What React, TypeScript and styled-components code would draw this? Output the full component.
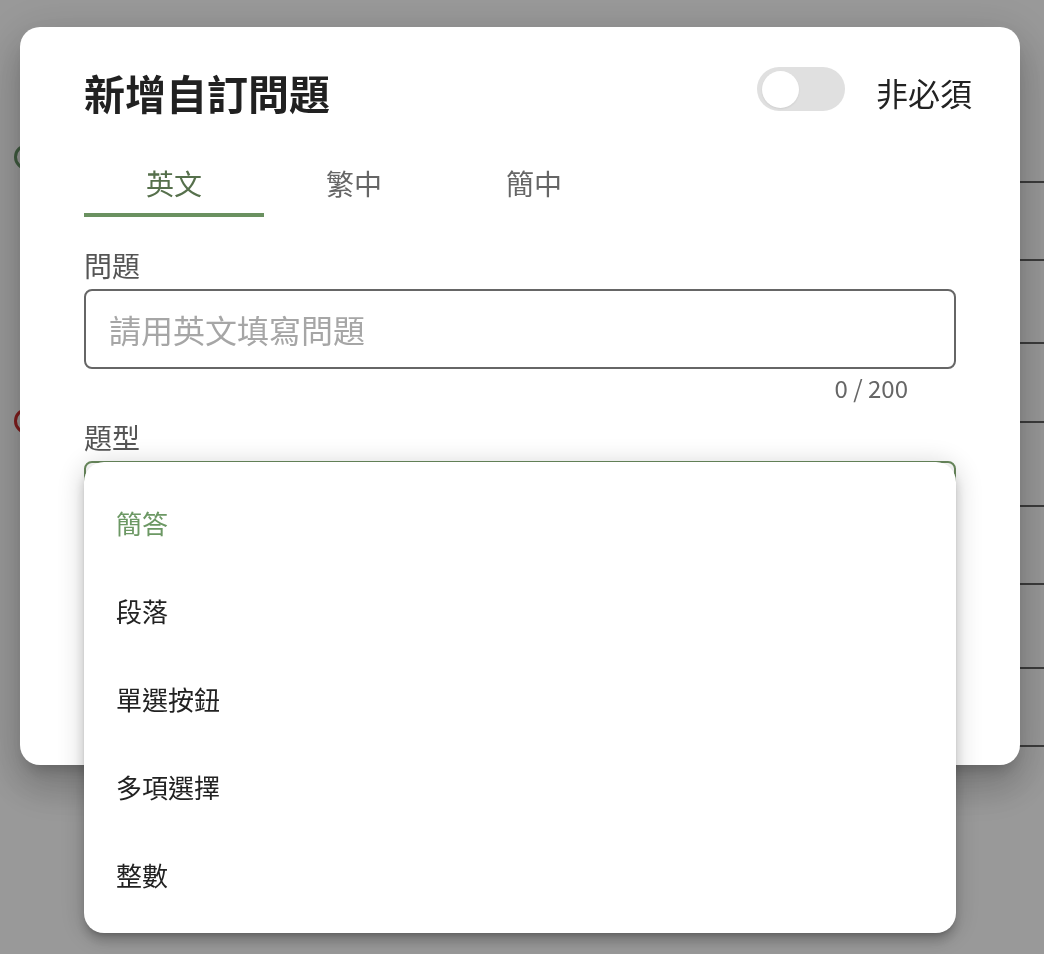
import React from "react";
import styled, { createGlobalStyle } from "styled-components";

const GlobalStyle = createGlobalStyle`
  html, body {
    margin: 0;
    padding: 0;
  }
  body {
    width: 1044px;
    height: 954px;
    overflow: hidden;
    font-family: "Noto Sans CJK TC", "Noto Sans", sans-serif;
    background: #fff;
  }
  * {
    box-sizing: border-box;
  }
`;

// page under the dialog, only slivers show through the backdrop
const Page = styled.div`
  height: 954px;
  display: flex;
  justify-content: space-between;
  background: #fff;
`;

const Markers = styled.div`
  display: flex;
  flex-direction: column;
  gap: 238px;
  padding: 144px 0 0 14px;
`;

const Ring = styled.div<{ $color: string }>`
  width: 26px;
  height: 26px;
  border-radius: 50%;
  border: 3px solid ${(p) => p.$color};
`;

const RowList = styled.div`
  width: 120px;
  display: flex;
  flex-direction: column;
`;

const Row = styled.div<{ $h: number }>`
  height: ${(p) => p.$h}px;
  border-bottom: 2px solid #646464;
`;

const Backdrop = styled.div`
  position: fixed;
  inset: 0;
  background: rgba(0, 0, 0, 0.4);
  padding: 27px 24px 0 20px;
`;

const Dialog = styled.div`
  width: 1000px;
  height: 738px;
  background: #fff;
  border-radius: 20px;
  padding: 40px 64px 0;
  box-shadow: 0 11px 15px -7px rgba(0, 0, 0, 0.2),
    0 24px 38px 3px rgba(0, 0, 0, 0.14), 0 9px 46px 8px rgba(0, 0, 0, 0.12);
`;

const Header = styled.div`
  display: flex;
  justify-content: space-between;
  align-items: flex-start;
  margin-right: -16px;
`;

const Title = styled.h2`
  margin: 0;
  font-size: 41px;
  font-weight: 700;
  line-height: 50px;
  color: #212121;
`;

const RequiredSwitch = styled.div`
  display: flex;
  align-items: flex-start;
  gap: 31px;
`;

const Track = styled.div`
  width: 88px;
  height: 44px;
  border-radius: 22px;
  background: #e0e0e0;
  padding: 4px 5px;
  margin-left: 1px;
`;

const Knob = styled.div`
  width: 37px;
  height: 37px;
  border-radius: 50%;
  background: #fff;
  box-shadow: 0 1px 2px rgba(0, 0, 0, 0.08);
`;

const SwitchLabel = styled.span`
  font-size: 32px;
  line-height: 44px;
  margin-top: 3px;
  color: #222;
`;

const Tabs = styled.div`
  display: flex;
  margin-top: 28px;
`;

const Tab = styled.div<{ $active?: boolean }>`
  width: 180px;
  height: 72px;
  padding-top: 8px;
  display: flex;
  align-items: center;
  justify-content: center;
  font-size: 28px;
  color: ${(p) => (p.$active ? "#56704c" : "#666")};
  border-bottom: 4px solid ${(p) => (p.$active ? "#6a9160" : "transparent")};
`;

const FieldLabel = styled.div<{ $gap: number }>`
  margin-top: ${(p) => p.$gap}px;
  font-size: 28px;
  line-height: 40px;
  color: #555;
`;

const TextInput = styled.input`
  display: block;
  width: 100%;
  height: 80px;
  margin-top: 4px;
  padding: 0 23px;
  border: 2px solid #666;
  border-radius: 8px;
  font-family: "Noto Sans CJK TC", "Noto Sans", sans-serif;
  font-size: 32px;
  color: #222;
  outline: none;
  &::placeholder {
    color: #a6a6a6;
  }
`;

const Counter = styled.div`
  margin-top: 3px;
  padding-right: 48px;
  text-align: right;
  font-size: 24px;
  line-height: 32px;
  color: #666;
`;

const SelectWrap = styled.div`
  position: relative;
  margin-top: 4px;
`;

const SelectBox = styled.div`
  height: 80px;
  border: 2px solid #6a8a5e;
  border-radius: 8px;
`;

const Menu = styled.ul`
  position: absolute;
  top: 1px;
  left: 0;
  right: 0;
  margin: 0;
  padding: 16px 0 15px;
  list-style: none;
  background: #fff;
  border-radius: 20px;
  box-shadow: 0 5px 5px -3px rgba(0, 0, 0, 0.2), 0 8px 10px 1px rgba(0, 0, 0, 0.14),
    0 3px 24px 4px rgba(0, 0, 0, 0.14);
`;

const MenuItem = styled.li<{ $selected?: boolean }>`
  height: 88px;
  padding: 0 32px;
  display: flex;
  align-items: center;
  font-size: 26px;
  color: ${(p) => (p.$selected ? "#6c9864" : "#222")};
`;

const rowHeights = [183, 78, 83, 79, 84, 78, 84, 78];
const types = ["簡答", "段落", "單選按鈕", "多項選擇", "整數"];

export default function App() {
  return (
    <>
      <GlobalStyle />
      <Page>
        <Markers>
          <Ring $color="#699669" />
          <Ring $color="#d32f2f" />
        </Markers>
        <RowList>
          {rowHeights.map((h, i) => (
            <Row key={i} $h={h} />
          ))}
        </RowList>
      </Page>
      <Backdrop>
        <Dialog>
          <Header>
            <Title>新增自訂問題</Title>
            <RequiredSwitch>
              <Track>
                <Knob />
              </Track>
              <SwitchLabel>非必須</SwitchLabel>
            </RequiredSwitch>
          </Header>
          <Tabs>
            <Tab $active>英文</Tab>
            <Tab>繁中</Tab>
            <Tab>簡中</Tab>
          </Tabs>
          <FieldLabel $gap={28}>問題</FieldLabel>
          <TextInput placeholder="請用英文填寫問題" />
          <Counter>0 / 200</Counter>
          <FieldLabel $gap={13}>題型</FieldLabel>
          <SelectWrap>
            <SelectBox />
            <Menu>
              {types.map((t, i) => (
                <MenuItem key={t} $selected={i === 0}>
                  {t}
                </MenuItem>
              ))}
            </Menu>
          </SelectWrap>
        </Dialog>
      </Backdrop>
    </>
  );
}
